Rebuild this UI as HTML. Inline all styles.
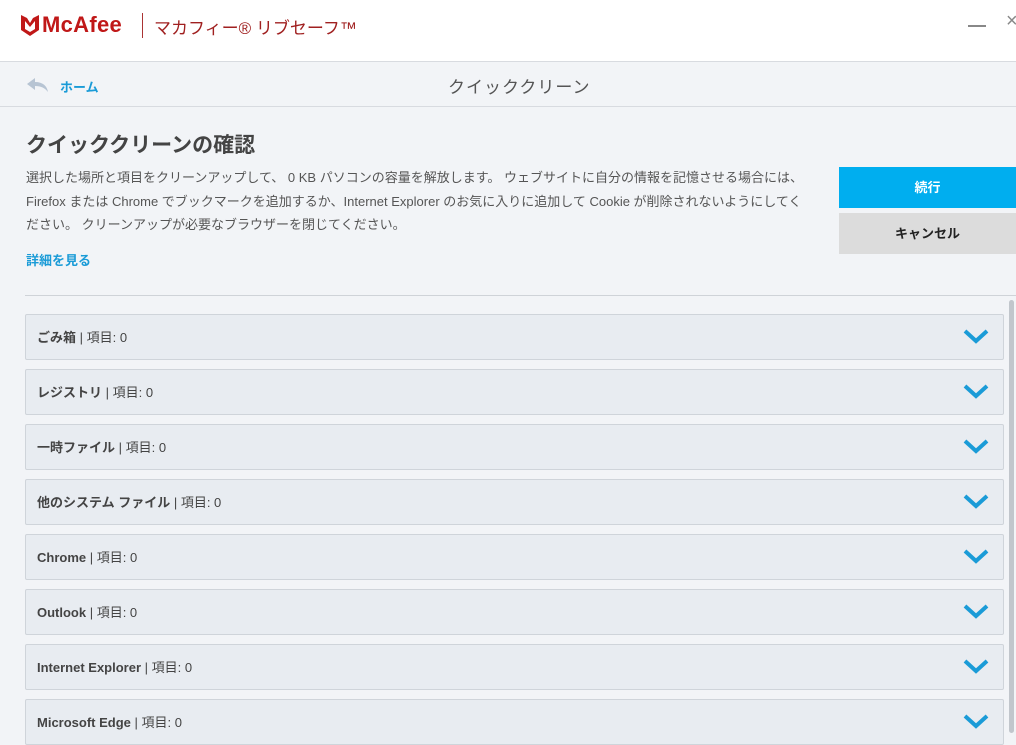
<!DOCTYPE html>
<html><head><meta charset="utf-8">
<style>
*{margin:0;padding:0;box-sizing:border-box}
body{width:1016px;height:733px;overflow:hidden;background:#f2f4f7;font-family:"Liberation Sans","Noto Sans CJK JP",sans-serif;color:#333;position:relative}
.top{position:absolute;left:0;top:0;width:1016px;height:62px;background:#fff;border-bottom:1px solid #d8dbe0}
.nav{position:absolute;left:0;top:62px;width:1016px;height:45px;border-bottom:1px solid #d8dbe0;background:#f2f4f7}
.abs{position:absolute;white-space:nowrap}
.row{position:absolute;left:25px;width:979px;height:46px;background:#e8ecf1;border:1px solid #cfd4da;border-radius:2px}
.row span{position:absolute;left:11px;top:12px;font-size:13px;color:#444}
.row b{font-weight:bold;color:#444}
.row svg{position:absolute;right:14px;top:13px}
p.t{font-size:13px;color:#555;line-height:23.5px}
</style></head><body>
<div class="top">
  <svg class="abs" style="left:21px;top:15px" width="18" height="21" viewBox="0 0 18 21"><path d="M0 0 L6 3 L9 8 L12 3 L18 0 V15 L9 21 L0 15Z" fill="#c01818"/><path d="M4 6 L9 12 L14 6 V14 L9 17 L4 14Z" fill="#fff"/></svg>
  <div class="abs" style="left:42px;top:12px;font-size:22px;font-weight:bold;color:#c01818;letter-spacing:0.3px">McAfee</div>
  <div class="abs" style="left:142px;top:13px;width:1px;height:25px;background:#a33"></div>
  <div class="abs" style="left:154px;top:14px;font-size:17px;color:#a02020">マカフィー® リブセーフ™</div>
  <div class="abs" style="left:968px;top:25px;width:18px;height:1.5px;background:#888"></div>
  <div class="abs" style="left:1006px;top:10px;font-size:20px;color:#888">×</div>
</div>
<div class="nav">
  <svg class="abs" style="left:27px;top:16px" width="22" height="14" viewBox="0 0 22 14"><path d="M8 0 L0 6 L8 12 V8 C14 8 18 10 21 14 C20 8 16 4 8 4Z" fill="#b7c4d3"/></svg>
  <div class="abs" style="left:60px;top:15px;font-size:13px;font-weight:bold;color:#1a9bd7">ホーム</div>
  <div class="abs" style="left:448px;top:11px;font-size:17px;color:#555;letter-spacing:1px">クイッククリーン</div>
</div>
<div class="abs" style="left:26px;top:129px;font-size:21px;font-weight:bold;color:#444">クイッククリーンの確認</div>
<div class="abs" style="left:26px;top:166px">
<p class="t">選択した場所と項目をクリーンアップして、 0 KB パソコンの容量を解放します。 ウェブサイトに自分の情報を記憶させる場合には、</p>
<p class="t">Firefox または Chrome でブックマークを追加するか、Internet Explorer のお気に入りに追加して Cookie が削除されないようにしてく</p>
<p class="t">ださい。 クリーンアップが必要なブラウザーを閉じてください。</p>
</div>
<div class="abs" style="left:26px;top:250px;font-size:13px;font-weight:bold;color:#1a9bd7">詳細を見る</div>
<div class="abs" style="left:839px;top:167px;width:177px;height:41px;background:#00aeef;color:#fff;font-size:13px;font-weight:bold;text-align:center;line-height:41px">続行</div>
<div class="abs" style="left:839px;top:213px;width:177px;height:41px;background:#dcdcdc;color:#222;font-size:13px;font-weight:bold;text-align:center;line-height:41px">キャンセル</div>
<div class="abs" style="left:25px;top:295px;width:991px;height:1px;background:#cfd3d8"></div>
<div class="abs" style="left:1009px;top:300px;width:5px;height:433px;background:#c1c6cc;border-radius:3px"></div>

<div class="row" style="top:314px"><span><b>ごみ箱</b> | 項目: 0</span><svg width="26" height="16"><path d="M2 3 L13 13 L24 3" stroke="#1a9bd7" stroke-width="4" fill="none"/></svg></div>
<div class="row" style="top:369px"><span><b>レジストリ</b> | 項目: 0</span><svg width="26" height="16"><path d="M2 3 L13 13 L24 3" stroke="#1a9bd7" stroke-width="4" fill="none"/></svg></div>
<div class="row" style="top:424px"><span><b>一時ファイル</b> | 項目: 0</span><svg width="26" height="16"><path d="M2 3 L13 13 L24 3" stroke="#1a9bd7" stroke-width="4" fill="none"/></svg></div>
<div class="row" style="top:479px"><span><b>他のシステム ファイル</b> | 項目: 0</span><svg width="26" height="16"><path d="M2 3 L13 13 L24 3" stroke="#1a9bd7" stroke-width="4" fill="none"/></svg></div>
<div class="row" style="top:534px"><span><b>Chrome</b> | 項目: 0</span><svg width="26" height="16"><path d="M2 3 L13 13 L24 3" stroke="#1a9bd7" stroke-width="4" fill="none"/></svg></div>
<div class="row" style="top:589px"><span><b>Outlook</b> | 項目: 0</span><svg width="26" height="16"><path d="M2 3 L13 13 L24 3" stroke="#1a9bd7" stroke-width="4" fill="none"/></svg></div>
<div class="row" style="top:644px"><span><b>Internet Explorer</b> | 項目: 0</span><svg width="26" height="16"><path d="M2 3 L13 13 L24 3" stroke="#1a9bd7" stroke-width="4" fill="none"/></svg></div>
<div class="row" style="top:699px"><span><b>Microsoft Edge</b> | 項目: 0</span><svg width="26" height="16"><path d="M2 3 L13 13 L24 3" stroke="#1a9bd7" stroke-width="4" fill="none"/></svg></div>
</body></html>
